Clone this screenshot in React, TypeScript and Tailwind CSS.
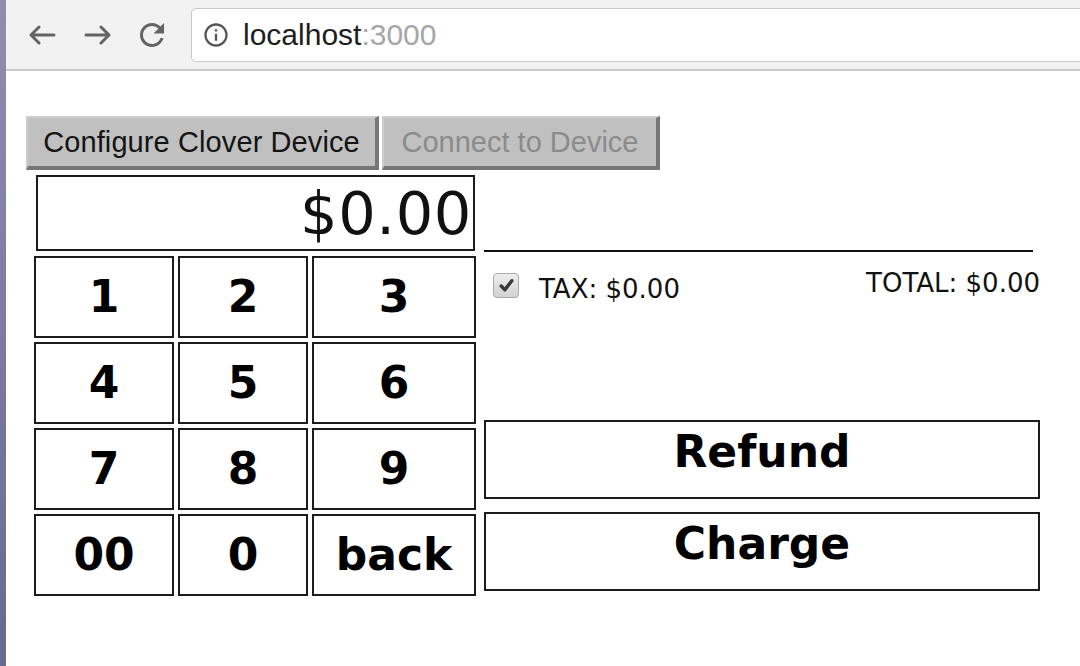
import React from 'react';

const keys = ['1', '2', '3', '4', '5', '6', '7', '8', '9', '00', '0', 'back'];

const BackArrow = () => (
  <svg width="28" height="20" viewBox="0 0 28 20" fill="none" stroke="#646464" strokeWidth="3" strokeLinecap="round" strokeLinejoin="round">
    <path d="M26 10H3M11 2L3 10l8 8" />
  </svg>
);

const ForwardArrow = () => (
  <svg width="28" height="20" viewBox="0 0 28 20" fill="none" stroke="#646464" strokeWidth="3" strokeLinecap="round" strokeLinejoin="round">
    <path d="M2 10h23M17 2l8 8-8 8" />
  </svg>
);

const Reload = () => (
  <svg width="36" height="36" viewBox="0 0 24 24" fill="#646464">
    <path d="M17.65 6.35C16.2 4.9 14.21 4 12 4c-4.42 0-7.99 3.58-7.99 8s3.57 8 7.99 8c3.73 0 6.84-2.55 7.73-6h-2.08c-.82 2.33-3.04 4-5.65 4-3.31 0-6-2.69-6-6s2.69-6 6-6c1.66 0 3.14.69 4.22 1.78L13 11h7V4l-2.35 2.35z" />
  </svg>
);

const InfoIcon = () => (
  <svg width="28" height="28" viewBox="0 0 24 24" fill="#555555">
    <path d="M11 7h2v2h-2zm0 4h2v6h-2zm1-9C6.48 2 2 6.48 2 12s4.48 10 10 10 10-4.48 10-10S17.52 2 12 2zm0 18c-4.41 0-8-3.59-8-8s3.59-8 8-8 8 3.59 8 8-3.59 8-8 8z" />
  </svg>
);

const App: React.FC = () => {
  return (
    <div className="w-[1080px] h-[666px] flex overflow-hidden bg-white">
      {/* desktop edge */}
      <div className="w-[6px] shrink-0 bg-gradient-to-b from-[#938cb0] to-[#656a92]" />

      <div className="flex-1 flex flex-col min-w-0">
        {/* Browser toolbar */}
        <div className="h-[71px] shrink-0 bg-[#f2f2f2] border-b-2 border-[#c8c8c8] flex items-center">
          <div className="ml-[22px] flex">
            <BackArrow />
          </div>
          <div className="ml-[28px] flex">
            <ForwardArrow />
          </div>
          <div className="ml-[22px] flex">
            <Reload />
          </div>
          <div className="ml-[21px] flex-1 h-[54px] -mr-[20px] bg-white border border-[#c9c9c9] rounded-[5px] flex items-center pl-[10px]">
            <InfoIcon />
            <span className="ml-[13px] text-[30px] leading-none font-['Liberation_Sans',Arial,sans-serif]">
              <span className="text-[#1e1e1e]">localhost</span>
              <span className="text-[#a6a6a6]">:3000</span>
            </span>
          </div>
        </div>

        {/* Page */}
        <div className="pt-[45px] pl-[20px] font-['DejaVu_Sans',Verdana,sans-serif] text-[#111]">
          <div className="flex gap-[3px] font-['Liberation_Sans',Arial,sans-serif] text-[29px]">
            <button className="w-[353px] h-[54px] bg-[#c0c0c0] border-t-2 border-l-2 border-r-4 border-b-4 border-t-[#cdcdcd] border-l-[#cdcdcd] border-r-[#767676] border-b-[#767676] text-[#141414] leading-none tracking-[0.1px]">
              Configure Clover Device
            </button>
            <button className="w-[278px] h-[54px] bg-[#c0c0c0] border-t-2 border-l-2 border-r-4 border-b-4 border-t-[#cdcdcd] border-l-[#cdcdcd] border-r-[#767676] border-b-[#767676] text-[#8b8b8b] leading-none">
              Connect to Device
            </button>
          </div>

          <div className="mt-[5px] flex">
            {/* Keypad column */}
            <div className="ml-[8px] w-[442px]">
              <div className="ml-[2px] w-[439px] h-[76px] border-2 border-[#1c1c1c] flex items-center justify-end pr-[1px]">
                <span className="text-[59px] leading-none tracking-[0.6px]">$0.00</span>
              </div>
              <div className="mt-[5px] grid grid-cols-[140px_130px_164px] auto-rows-[82px] gap-[4px]">
                {keys.map((k) => (
                  <button
                    key={k}
                    className="border-2 border-[#1c1c1c] flex items-center justify-center text-[44px] font-bold text-black leading-none"
                  >
                    {k}
                  </button>
                ))}
              </div>
            </div>

            {/* Totals column */}
            <div className="ml-[8px] w-[556px] flex flex-col">
              <div className="mt-[75px] h-[2px] w-[549px] bg-[#111]" />
              <div className="mt-[16px] flex justify-between items-start text-[26px] leading-[30px]">
                <div className="mt-[6px] flex items-start">
                  <div className="ml-[9px] -mt-[1px] w-[26px] h-[25px] rounded-[4px] border border-[#a9a9a9] bg-gradient-to-b from-[#eeeeee] to-[#d2d2d2] flex items-center justify-center">
                    <svg width="17" height="17" viewBox="0 0 16 16" fill="none" stroke="#383838" strokeWidth="3.2" strokeLinecap="round" strokeLinejoin="round">
                      <path d="M3 8.5l3.5 3.5L13 3.5" />
                    </svg>
                  </div>
                  <span className="ml-[20px]">TAX: $0.00</span>
                </div>
                <span>TOTAL: $0.00</span>
              </div>
              <button className="mt-[116px] h-[79px] border-2 border-[#1c1c1c] flex justify-center pt-[4px] text-[44px] font-bold text-black leading-[51px]">
                Refund
              </button>
              <button className="mt-[13px] h-[79px] border-2 border-[#1c1c1c] flex justify-center pt-[4px] text-[44px] font-bold text-black leading-[51px]">
                Charge
              </button>
            </div>
          </div>
        </div>
      </div>
    </div>
  );
};

export default App;
